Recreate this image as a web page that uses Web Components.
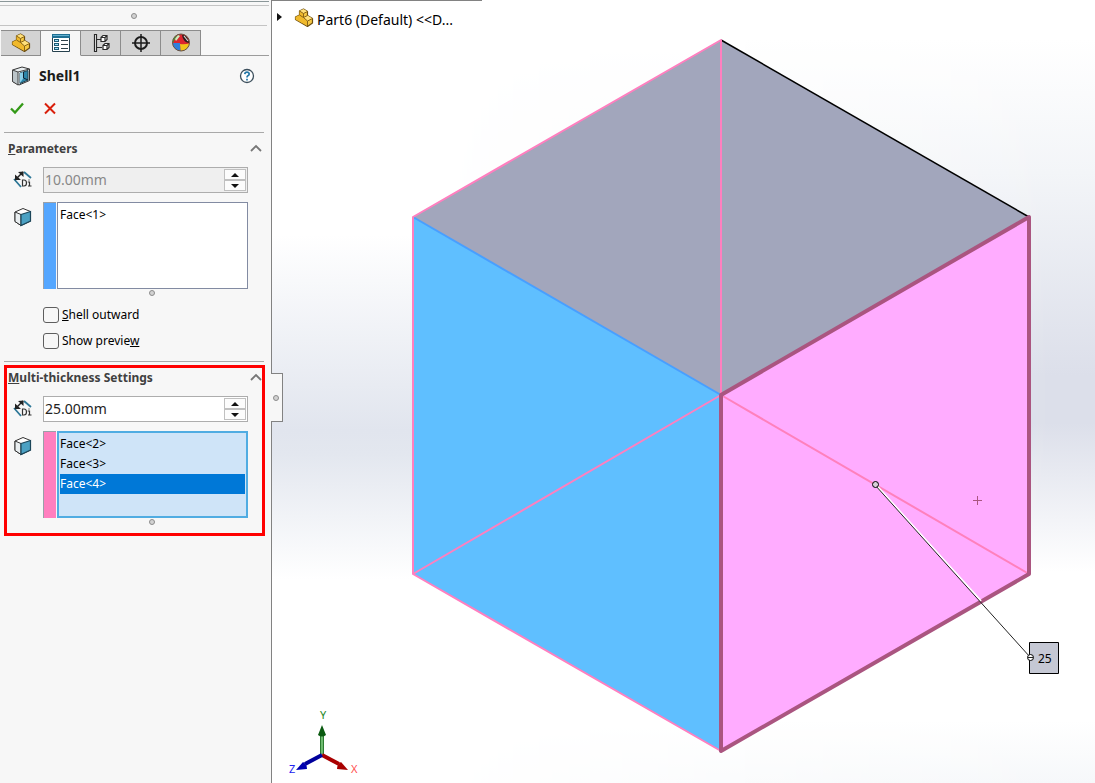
<!DOCTYPE html>
<html lang="en">
<head>
<meta charset="utf-8">
<meta name="viewport" content="width=device-width, initial-scale=1">
<title>Part6 - Shell1</title>
<style>
  body { margin: 0; font: 12px/20px "Noto Sans", "Open Sans", sans-serif; color: #000; background: #fff; }
</style>
</head>
<body>
<cad-app>
  <pm-panel slot="panel" heading="Shell1">
    <pm-group>
      <span slot="title"><u>P</u>arameters</span>
      <pm-spin value="10.00mm" label="Thickness" disabled></pm-spin>
      <pm-selection color="#54a6ff" label="Faces to remove" items="Face&lt;1&gt;"></pm-selection>
      <pm-check><u>S</u>hell outward</pm-check>
      <pm-check>Show previe<u>w</u></pm-check>
    </pm-group>
    <pm-group highlight>
      <span slot="title"><u>M</u>ulti-thickness Settings</span>
      <pm-spin value="25.00mm" label="Multi-thickness"></pm-spin>
      <pm-selection active color="#ff7fbf" label="Multi-thickness faces" items="Face&lt;2&gt;,Face&lt;3&gt;,Face&lt;4&gt;" selected="2"></pm-selection>
    </pm-group>
  </pm-panel>
  <model-view>
    <feature-tree slot="tree">Part6 (Default) &lt;&lt;D...</feature-tree>
  </model-view>
</cad-app>

<script>
const partIcon = `<svg width="20" height="20" viewBox="0 0 20 20" aria-hidden="true">
  <path d="M1.500 9 L5.500 7 V3 L9.500 1 L13.500 3.500 V7.500 L18.500 10.500 V15 L13.500 18.500 L1.500 11.500Z" fill="#f6c944" stroke="#6b4d12" stroke-width="1.200" stroke-linejoin="round"/>
  <path d="M1.500 9 L5.500 7 V3 L9.500 5.500 V9.500 L13.500 12.500 V18 L1.500 11.500Z" fill="#f0b92c"/>
  <path d="M5.500 3 L9.500 1 L13.500 3.500 L9.500 5.500Z M9.500 9.500 L13.500 7.500 L18.500 10.500 L13.500 13Z" fill="#ffe07a"/>
  <path d="M5.500 3 L9.500 5.500 L13.500 3.500 M9.500 5.500 V9.500 L13.500 7.500 M9.500 9.500 L13.500 13 L18.500 10.500 M13.500 13 V18 M5.500 7 L9.500 9.500" fill="none" stroke="#8a6516" stroke-width="1"/>
</svg>`;

const define = (name, html, setup) => {
  const template = document.createElement('template');
  template.innerHTML = html;
  customElements.define(name, class extends HTMLElement {
    constructor() {
      super();
      this.attachShadow({ mode: 'open' }).append(template.content.cloneNode(true));
    }
    connectedCallback() { if (setup) setup(this, this.shadowRoot); }
  });
};

define('cad-app', `
<style>
  :host { display: grid; grid-template-columns: 272px 1fr; min-height: 100vh; }
</style>
<slot name="panel"></slot><slot></slot>`);

define('grip-dot', `
<style>
  :host { display: block; box-sizing: border-box; width: 6px; height: 6px; border: 1px solid #8c8c8c; border-radius: 50%; background: #d2d2d2; }
</style>`);

define('pm-tabs', `
<style>
  :host { display: flex; margin: 0 2px 0 1px; }
  button { box-sizing: border-box; width: 40px; height: 26px; padding: 0; display: grid; place-items: center; background: #d3d3d3; border: 1px solid #8c8c8c; border-left: 0; }
  button[aria-selected="true"] { background: #f7f7f7; border-bottom-color: #f7f7f7; }
  div { flex: 1; border-bottom: 1px solid #9c9c9c; }
  svg { display: block; }
</style>
<button role="tab" aria-label="FeatureManager">${partIcon}</button>
<button role="tab" aria-label="PropertyManager" aria-selected="true">
  <svg width="20" height="20" viewBox="0 0 20 20"><path d="M1.500 1.500h17v17h-17z" fill="#fff" stroke="#26414e"/><path d="M1 1h18v4H1z" fill="#1f6f93"/><path d="M2 2.500h16" stroke="#63b0cf"/><path d="M3 6h5v3H3zM3 10h5v3H3zM3 14h5v3H3z" fill="#1b5a75"/><path d="M4 7.500h3M4 11.500h3M4 15.500h3" stroke="#9fe0f6"/><path d="M10 7.500h7M10 11.500h7M10 15.500h7" stroke="#30424a"/></svg>
</button>
<button role="tab" aria-label="ConfigurationManager">
  <svg width="20" height="20" viewBox="0 0 20 20" fill="none" stroke="#2a2a2a" stroke-width="1.200"><path d="M3.500 1.500h2v17h-2zM6 6.500h5M6 14.500h5" fill="#fff"/><path d="M10 4.500l2-2h4v4l-2 2h-4zM10 4.500h4v4M14 4.500l2-2M12 12.500l2-2h4v4l-2 2h-4zM12 12.500h4v4M16 12.500l2-2" fill="#fff"/></svg>
</button>
<button role="tab" aria-label="DimXpertManager">
  <svg width="20" height="20" viewBox="0 0 20 20" fill="none" stroke="#1c1c1c" stroke-width="2"><circle cx="10" cy="10" r="6"/><path d="M10 1v18M1 10h18" stroke-width="1.500"/></svg>
</button>
<button role="tab" aria-label="DisplayManager">
  <svg width="20" height="20" viewBox="0 0 20 20"><defs><clipPath id="ball"><circle cx="10" cy="9.500" r="8.500"/></clipPath></defs><g clip-path="url(#ball)"><path d="M0 0h20v20H0z" fill="#dc2530"/><path d="M8 0Q4 5 2 10H0V0z" fill="#35a63b"/><path d="M0 10h9l1 10H0z" fill="#2f7fdc"/><path d="M9 11q5 1 11-1v10H10z" fill="#f2c51c"/><path d="M11 2q6 0 7 8-6-1-7-8z" fill="#2b1c1c"/><path d="M13 3l4 5" stroke="#ddd" stroke-width="1.200"/><path d="M4 6l3-4 2 1-4 5z" fill="#c9f0c0"/></g><circle cx="10" cy="9.500" r="8.500" fill="none" stroke="#654"/></svg>
</button>
<div></div>`);

define('pm-panel', `
<style>
  :host { display: block; position: relative; z-index: 1; background: #f7f7f7; border-right: 1px solid #828282; }
  .strip { height: 3px; margin-right: 2px; border-top: 1px solid #8b9799; border-bottom: 1px solid #c4c4c4; }
  .top { padding-top: 1px; }
  .grip { display: grid; place-items: center; height: 19px; margin-right: 4px; border-bottom: 1px solid #c4c4c4; }
  pm-tabs { margin-top: 4px; }
  header { display: flex; align-items: center; height: 40px; padding: 0 16px 0 11px; }
  h1 { flex: 1; margin: 0 0 0 8px; font-size: 14px; line-height: 20px; color: #1b1b1b; }
  button { display: block; padding: 0; border: 0; background: none; }
  svg { display: block; }
  .actions { display: flex; gap: 17px; height: 16px; padding: 4px 0 16px 9px; }
  .flyout { position: absolute; left: 100%; top: 373px; display: grid; place-items: center; box-sizing: border-box; width: 12px; height: 49px; padding: 0 2px 0 0; background: #f7f7f7; border: 1px solid #828282; border-left: 0; }
</style>
<div class="top"><div class="strip"></div></div>
<div class="grip"><grip-dot></grip-dot></div>
<pm-tabs role="tablist"></pm-tabs>
<header>
  <svg width="20" height="20" viewBox="0 0 20 20" aria-hidden="true"><path d="M1.500 4L11 1l7.500 2v11.500L8 19l-6.500-3.500z" fill="#e9eef0" stroke="#333"/><path d="M1.500 4L7 6v13l-5.500-3.500z" fill="#bcc5c9" stroke="#444"/><path d="M7 6l11.500-3" stroke="#444"/><path d="M9 7l8-2.500v9.500l-8 3.500z" fill="#2c86aa" stroke="#1d4151"/><path d="M12.500 6v6l-3.500 5V7z" fill="#8cd0ea"/><path d="M12.500 6v6l4.500 2" fill="none" stroke="#123"/></svg>
  <h1></h1>
  <button aria-label="Help"><svg width="16" height="16" viewBox="0 0 16 16"><circle cx="8" cy="8" r="6.500" fill="#fff" stroke="#3c4f5c" stroke-width="1.300"/><path d="M5.800 6.200Q6 4.200 8 4.200t2.200 1.800Q10.200 7.200 8.900 7.800 8 8.300 8 9.500M8 10.800v1.600" fill="none" stroke="#2478a8" stroke-width="1.700"/></svg></button>
</header>
<div class="actions">
  <button aria-label="OK"><svg width="16" height="16" viewBox="0 0 16 16"><path d="M2 8.500l4 4 8-9" fill="none" stroke="#349a18" stroke-width="2.300"/></svg></button>
  <button aria-label="Cancel"><svg width="16" height="16" viewBox="0 0 16 16"><path d="M3 3.500l10 10M13 3.500l-10 10" fill="none" stroke="#d91f0b" stroke-width="2"/></svg></button>
</div>
<slot></slot>
<div class="flyout"><grip-dot></grip-dot></div>`,
(host, root) => { root.querySelector('h1').textContent = host.getAttribute('heading'); });

define('pm-group', `
<style>
  :host { display: block; }
  .rule { height: 1px; margin: 0 7px 0 4px; background: #a9a9a9; }
  section { display: grid; grid-template-columns: minmax(0, 1fr); margin: 3px 6px 0 4px; padding-bottom: 12px; }
  :host([highlight]) section { padding-bottom: 11px; outline: 3px solid #f00; outline-offset: -3px; }
  h2 { display: flex; align-items: center; justify-content: space-between; height: 26px; margin: 0 0 5px; padding: 0 3px 0 4px; font-size: 12px; line-height: 20px; color: #404040; }
  button { padding: 0; border: 0; background: none; }
  svg { display: block; }
  ::slotted(pm-selection) { margin-top: 9px; }
  ::slotted(pm-check) { margin-bottom: 10px; }
  ::slotted(pm-check:last-child) { margin-bottom: 0; }
</style>
<div class="rule"></div>
<section>
  <h2><slot name="title"></slot><button aria-label="Collapse"><svg width="12" height="12" viewBox="0 0 12 12"><path d="M1 8l5-5 5 5" fill="none" stroke="#777" stroke-width="1.800"/></svg></button></h2>
  <slot></slot>
</section>`);

define('pm-spin', `
<style>
  :host { display: grid; grid-template-columns: 39px minmax(0, 1fr); align-items: center; margin-right: 17px; }
  label svg { display: block; margin-left: 9px; }
  .box { display: flex; box-sizing: border-box; height: 26px; background: #fff; border: 1px solid #adadad; padding: 1px; }
  :host([disabled]) .box { background: #efefef; }
  input { flex: 1; min-width: 0; margin: 0; padding: 0; border: 0; outline: 0; background: none; font: 14px/20px "Noto Sans", sans-serif; color: #222; }
  input:disabled { color: #888; }
  .arrows { display: grid; grid-template-rows: 11px 11px; }
  button { box-sizing: border-box; width: 22px; padding: 0; display: grid; place-items: center; background: #fcfcfc; border: 1px solid #c0c0c0; }
  button svg { display: block; }
</style>
<label for="v"><svg width="20" height="20" viewBox="0 0 20 20"><path d="M1 9l7 8M11 2l7 6" stroke="#2d7797" stroke-width="1.800"/><path d="M2 10l8-8" stroke="#222" stroke-width="1.500"/><path d="M2 10V4.500L8 10zM10.500 1.500v5.500L5 2z" fill="#222"/><path d="M9.500 10v6h1.500q2.500 0 2.500-3t-2.500-3zM16 9.500v1M14.800 12h1.700v4M15 16h3.500" fill="none" stroke="#333" stroke-width="1.200"/></svg></label>
<div class="box"><input id="v" type="text"><span class="arrows">
<button aria-label="Increase"><svg width="8" height="4" viewBox="0 0 8 4"><path d="M0 4l4-4 4 4z" fill="#111"/></svg></button>
<button aria-label="Decrease"><svg width="8" height="4" viewBox="0 0 8 4"><path d="M0 0l4 4 4-4z" fill="#111"/></svg></button></span></div>`,
(host, root) => {
  const input = root.querySelector('input');
  input.value = host.getAttribute('value');
  input.disabled = host.hasAttribute('disabled');
  input.setAttribute('aria-label', host.getAttribute('label'));
});

define('pm-selection', `
<style>
  :host { display: grid; grid-template-columns: 39px 13px minmax(0, 1fr); margin-right: 17px; }
  .icon { margin: 5px 0 0 9px; }
  .swatch { border: 1px solid #9aa0a8; border-width: 1px 0 0 1px; }
  ul { box-sizing: border-box; height: 87px; margin: 0 0 0 1px; padding: 2px; list-style: none; background: #fff; border: 1px solid #828ba2; }
  :host([active]) ul { background: #cfe4f8; border: 2px solid #50ace2; padding: 1px; }
  li { height: 20px; line-height: 20px; }
  li[aria-selected="true"] { background: #0078d7; color: #fff; }
  grip-dot { grid-column: 2 / 4; justify-self: center; margin: 1px 0 11px 13px; }
  :host([active]) grip-dot { margin-bottom: 0; }
</style>
<svg class="icon" width="20" height="20" viewBox="0 0 20 20" aria-hidden="true"><path d="M2 5l8-3.500 7.500 3V14l-9.500 4.500L2 14.500z" fill="#fff" stroke="#333" stroke-linejoin="round"/><path d="M2 5l6 2.500v11L2 14.500z" fill="#e9eef0" stroke="#333"/><path d="M8 7.500l9.500-3V14L8 18.500z" fill="#4ba1c3" stroke="#1c4659" stroke-width="1.200"/></svg>
<div class="swatch"></div>
<ul role="listbox"></ul>
<grip-dot></grip-dot>`,
(host, root) => {
  root.querySelector('.swatch').style.background = host.getAttribute('color');
  const list = root.querySelector('ul');
  list.setAttribute('aria-label', host.getAttribute('label'));
  list.replaceChildren(...host.getAttribute('items').split(',').map((text, i) => {
    const li = document.createElement('li');
    li.setAttribute('role', 'option');
    li.setAttribute('aria-selected', String(i) === host.getAttribute('selected'));
    li.textContent = text;
    return li;
  }));
});

define('pm-check', `
<style>
  :host { display: block; height: 16px; margin-left: 39px; }
  label { display: flex; align-items: center; gap: 3px; height: 16px; }
  input { appearance: none; box-sizing: border-box; width: 16px; height: 16px; margin: 0; border: 1px solid #5e5e5e; border-radius: 3px; background: #f7f7f7; }
</style>
<label><input type="checkbox"><span><slot></slot></span></label>`);

define('feature-tree', `
<style>
  :host { display: flex; align-items: center; font-size: 14px; line-height: 20px; }
  .arrow { margin: 0 12px 6px 0; }
  .part { margin: 0 3px 4px 0; }
  svg { display: block; }
</style>
<svg class="arrow" width="5" height="8" viewBox="0 0 5 8" aria-hidden="true"><path d="M0 0l5 4-5 4z" fill="#111"/></svg>
<span class="part">${partIcon}</span>
<span><slot></slot></span>`);

define('model-view', `
<style>
  :host { display: block; position: relative; min-width: 0; overflow: hidden; background: linear-gradient(#fff 30%, #e1e5ee 55%, #e3e7ef 58%, #fff 74%); }
  .shade { position: absolute; inset: 0; background: linear-gradient(#fff 5%, #f3f5f8 22%, #dcdfea 48%, #dcdfea 54%, #fff 73%, #fff 92%, #f6f8fa); mask-image: linear-gradient(90deg, transparent 20%, #000 95%); }
  .edge { position: absolute; left: 0; top: 0; width: 210px; height: 1px; background: #828282; }
  ::slotted(feature-tree) { position: absolute; left: 5px; top: 8px; }
  svg { position: absolute; inset: 0; width: 100%; height: 100%; }
  text { font-family: "Noto Sans", sans-serif; }
</style>
<div class="shade"></div>
<svg viewBox="272 0 823 783" role="img" aria-label="Cube model">
  <defs><linearGradient id="green"><stop stop-color="#0a5a10"/><stop offset="0.500" stop-color="#8fdc8f"/><stop offset="1" stop-color="#0a5a10"/></linearGradient></defs>
  <path d="M721 40L1029 217 721 395 413 217z" fill="#a2a6bc"/>
  <path d="M413 217L721 395V751L413 574z" fill="#5fbfff"/>
  <path d="M721 395L1029 217V574L721 751z" fill="#ffacff"/>
  <path d="M721 40L1029 217" stroke="#000" stroke-width="1.500"/>
  <path d="M413 217L721 395" stroke="#489fff" stroke-width="2"/>
  <path d="M721 395V40L413 217V574L721 395M413 574L721 751" fill="none" stroke="#ff7fbf" stroke-width="2" stroke-linejoin="round"/>
  <path d="M721 395L1029 574" stroke="#ff80bc" stroke-width="2"/>
  <path d="M721 395L1029 217V574L721 751z" fill="none" stroke="#aa5580" stroke-width="4" stroke-linejoin="round"/>
  <path d="M973 500.500h9M977.500 496v9" stroke="#aa5580"/>
  <path d="M876 485L981 601" stroke="#fff" stroke-width="2"/>
  <path d="M875 485L1030 657" stroke="#222"/>
  <path d="M1029.500 642.500h29v31h-29z" fill="#c5c8d4" stroke="#000"/>
  <circle cx="875.500" cy="484.500" r="3" fill="#d8d0d8" stroke="#000"/>
  <circle cx="1030.500" cy="657.500" r="3" fill="#fff" stroke="#000"/>
  <path d="M1028 657.500h5" stroke="#222"/>
  <text x="1038" y="663" font-size="12">25</text>
  <path d="M320 755V736h4v19z" fill="url(#green)"/>
  <path d="M322 725l4 10q-4 3-8 0z" fill="#0a5a10"/>
  <path d="M322 755l17 9" stroke="#a00" stroke-width="4"/>
  <path d="M348 770l-11-1q0-5 4-7z" fill="#a80000"/>
  <path d="M322 755l-17 9" stroke="#00009c" stroke-width="4"/>
  <path d="M296 770l11-1q0-5-4-7z" fill="#0000b0"/>
  <text x="320" y="719" font-size="11" fill="#1d861d">Y</text>
  <text x="351" y="773" font-size="11" fill="#ff5050">X</text>
  <text x="289" y="773" font-size="11" fill="#2222f0">Z</text>
</svg>
<div class="edge"></div>
<slot name="tree"></slot>`);
</script>
</body>
</html>
